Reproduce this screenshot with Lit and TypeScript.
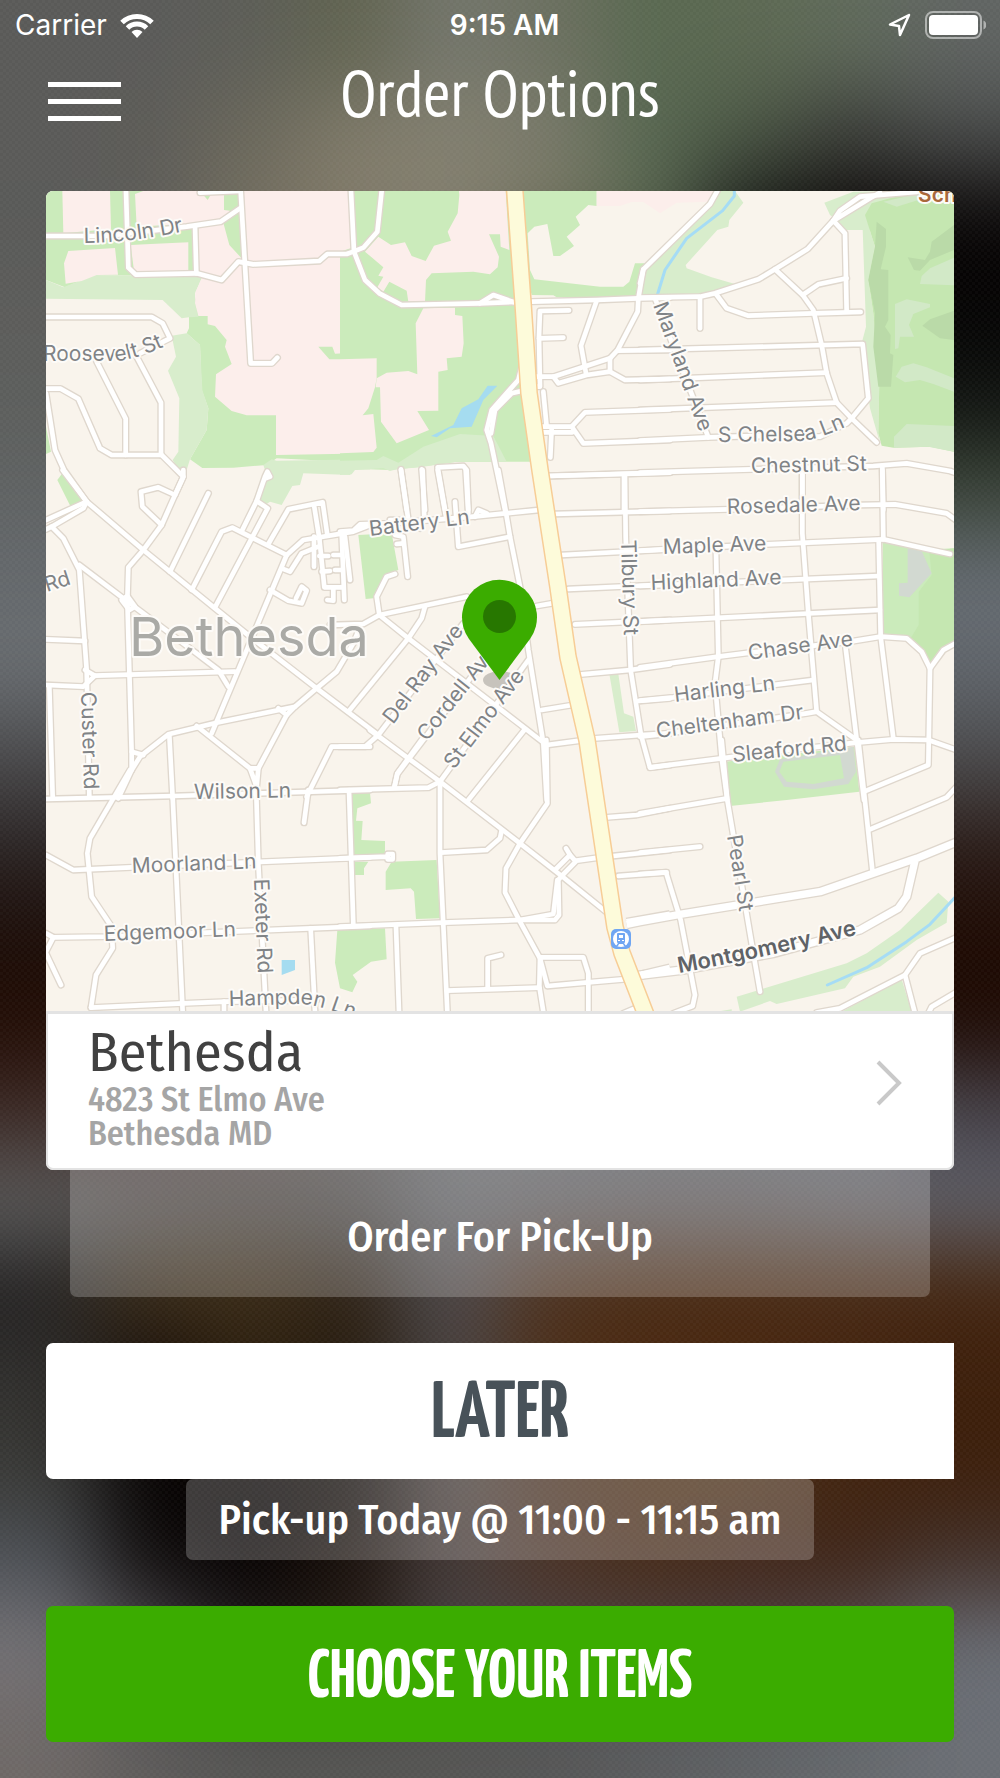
import { LitElement, html, svg, css } from "lit";
import { customElement } from "lit/decorators.js";

/* ---------- Map data ----------
   The map is surveyed in sheets. Each sheet has an origin on the map plane
   and is drawn at three units per map pixel. */

interface Sheet {
  x: number;
  y: number;
  areas: [string, string][];
  roads: string[];
  avenues?: string[];
  streams?: string[];
}

const GREEN = "#cbebbb";
const PALE = "#d8edcc";
const PINK = "#fceeeb";
const PARK = "#c5e7b1";
const SHADE = "#badaa8";
const GLADE = "#d2e9c7";
const WATER = "#a5dcf0";
const TRACK = "#d2d9d1";
const LAND = "#f9f4ec";

const sheets: Sheet[] = [
  {
    x: 40, y: 180,
    areas: [
      [GREEN, "18,33 1000,33 1000,850 710,835 680,855 580,863 487,864 450,838 500,750 505,685 485,630 480,495 440,460 447,445 447,410 490,290 165,285 75,322 18,300"],
      [PALE, "18,300 70,322 165,285 487,290 465,340 465,370 475,410 447,412 425,415 368,360 18,356"],
      [PALE, "395,467 440,460 480,495 487,630 505,685 500,750 450,838 440,870 425,885 398,840 415,815 418,655 384,572 408,530"],
      [PALE, "670,855 695,838 710,842 990,838 990,868 940,870 930,885 790,880 780,915 757,918 725,975 690,965 660,985 640,960 675,870"],
      [PINK, "67,33 210,33 213,147 70,160"],
      [PINK, "285,42 310,33 552,33 552,90 570,92 545,125 290,140"],
      [GREEN, "490,45 512,45 503,60"],
      [PINK, "85,213 225,204 234,284 170,285 125,303 77,311 72,250"],
      [PINK, "272,195 332,192 445,187 445,272 283,280"],
      [PINK, "475,140 550,128 568,195 605,235 600,33 930,33 940,215 955,270 965,290 950,297 965,315 970,420 980,440 980,516 885,521 877,500 835,500 868,538 1005,538 1005,820 708,825 708,706 620,706 575,693 525,650 528,583 575,552 555,500 560,480 525,438 503,433 503,408 475,408 465,370 467,335 487,290 475,280"],
      [GREEN, "18,740 33,815 18,822"],
    ],
    roads: [
      "18,168 200,168 440,140 542,125 600,85", "480,38 600,33",
      "258,33 265,263 287,284 470,280 545,300 595,245 640,253 838,243 862,222 920,222 940,215 970,203 1012,155 1025,33",
      "465,138 469,280", "602,33 605,85 632,550 696,550 712,533",
      "18,411 335,411 368,430 390,475 300,520",
      "18,626 62,626 115,656 180,805 215,825 365,825 430,890 405,945",
      "170,545 257,716 257,825", "290,530 363,668 363,825",
      "18,640 45,810 72,870 140,965",
    ],
  },
  {
    x: 340, y: 180,
    areas: [
      [GREEN, "0,33 500,33 570,845 350,845 240,860 150,870 0,865"],
      [GREEN, "500,33 770,33 770,78 745,75 707,110 720,135 680,170 702,198 660,228 640,228 622,132 583,140 563,160 570,270 583,298 780,320 850,320 868,305 885,250 930,250 900,355 650,352 640,346 575,345"],
      [PALE, "0,885 35,883 45,870 130,865 150,873 170,868 240,862 350,845 500,845 460,768 360,762 250,800 175,848 130,828 110,840 0,842"],
      [PINK, "0,33 30,33 45,200 0,215"],
      [PINK, "357,33 497,33 508,210 482,200 480,163 447,163 477,230 473,262 450,283 400,275 275,280 258,300 255,365 205,365 200,332 148,305 130,335 112,322 130,290 115,287 130,262 75,215 115,170 153,195 195,187 215,228 257,243 282,197 333,182 323,155 353,100 358,45"],
      [PINK, "0,538 110,535 110,595 105,622 85,685 68,706 100,702 110,803 100,816 0,820"],
      [PINK, "110,595 140,578 205,573 232,583 227,430 250,385 345,383 345,405 367,408 371,490 365,530 320,535 323,570 295,575 295,692 232,693 267,750 170,790 123,725 120,622 107,622"],
      [PINK, "770,33 1120,33 1105,65 1010,68 960,100 910,66 875,66 840,78 770,78"],
      [WATER, "443,617 472,617 430,660 395,740 330,745 290,772 273,768 340,735 365,685 415,658"],
    ],
    roads: [
      "33,33 42,215 75,300 118,340 185,375 420,370 525,366", "420,370 460,345 520,366",
      "575,365 770,360 895,355 990,353", "770,362 723,497 738,580",
      "910,268 895,355 893,395 833,510 810,535 640,590 655,610 740,585 810,575 855,600 990,597",
      "585,590 640,590", "810,535 810,575", "833,512 990,510",
      "687,391 600,393 597,470 600,620 590,620", "597,475 670,473",
      "610,635 620,740", "635,745 631,832",
      "605,740 695,740 735,697 990,688", "605,757 697,757", "695,740 730,790 990,780",
      "545,560 535,600 455,690 440,750 453,790 495,990", "548,632 515,640 465,690 453,760",
      "625,888 990,877", "852,885 852,990",
      "183,868 200,990", "245,868 255,990", "315,990 293,862 370,858 380,870 385,990",
    ],
  },
  {
    x: 640, y: 180,
    areas: [
      [PALE, "235,33 285,33 310,68 268,120 265,140 232,150 137,255 140,265 215,292 285,312 190,350 0,352 5,270"],
      [PALE, "553,68 640,35 830,33 690,150 610,150 590,120 570,105"],
      [PALE, "665,75 690,55 675,105 705,200 685,300 700,400 718,600 715,760 720,790 690,685 665,490 678,440 668,147"],
      [PARK, "675,105 695,70 830,33 942,33 942,815 870,800 760,803 725,797 715,760 718,600 700,400 685,300 705,200"],
      [SHADE, "710,125 738,147 738,200 722,268 745,270 745,420 735,440 752,465 750,520 760,525 753,620 715,620 700,500 705,400 685,300 705,200"],
      [SHADE, "942,135 942,210 870,240 840,272 822,270 803,232 855,240 870,215 875,185"],
      [SHADE, "942,392 942,480 900,475 847,437 870,418"],
      [GLADE, "942,233 942,316 840,312 845,288 870,265"],
      [GLADE, "765,372 800,358 870,372 870,382 820,402 807,435 822,470 780,470 775,505 765,507"],
      [GLADE, "767,590 785,560 820,550 860,562 942,595 942,635 880,612 840,600 795,607"],
      [GLADE, "762,770 800,732 942,738 942,815 865,800 762,803"],
      [GLADE, "730,65 830,42 870,33 835,60 770,80"],
    ],
    streams: ["283,33 283,48 248,92 140,175 75,270 53,342"],
    roads: [
      "232,33 210,72 10,268 0,310",
      "0,353 180,350 225,340 355,298 405,268 503,207 580,122 615,160 620,395",
      "580,122 600,92 660,50 830,36", "580,122 690,55 720,38",
      "405,268 488,345 520,390 545,495 560,580 590,668 635,715 710,787",
      "488,345 535,313 620,295", "228,342 260,385 325,407 520,400 662,396", "180,352 180,445",
      "0,510 668,492 685,655 635,715", "0,600 560,578", "0,690 590,668",
      "0,782 205,772 340,768 540,770 620,730 635,715", "45,355 205,772",
      "0,878 335,868 700,858 800,850 930,873 950,880", "487,870 487,990", "727,858 730,990",
    ],
  },
  {
    x: 40, y: 470,
    areas: [
      [GREEN, "68,8 52,30 92,110 135,90"],
      ["#dfe6cc", "35,165 128,112 60,150"],
    ],
    roads: [
      "68,0 140,95 310,240 525,415 630,500 830,655 1015,795",
      "18,150 140,95", "18,178 35,170 130,115 140,95",
      "35,170 70,205 118,300 140,600 148,980",
      "118,285 250,385 430,520 535,600 565,650",
      "430,0 430,20 405,75 365,165 310,240 265,292 262,390 275,850 275,900",
      "405,75 355,52 303,65 307,110 365,165", "505,70 390,305",
      "455,360 545,185 577,173 740,255", "525,412 683,115 650,93 607,180", "650,93 675,20 682,5 690,20 675,26",
      "685,222 745,118 848,97 862,195", "740,255 790,210 940,185 990,165",
      "740,255 515,790", "822,105 838,205",
      "725,295 750,305 785,250 835,230", "690,360 745,392 785,400 800,362 785,350 768,385",
      "822,200 822,290", "838,205 853,352 910,352", "905,190 913,390", "915,200 930,330",
      "838,258 865,258", "880,255 905,255", "845,305 870,303", "885,300 908,300", "880,355 880,392 862,390",
      "18,508 135,513", "18,645 130,650 165,617 585,605", "135,600 165,617", "28,650 38,980",
      "235,985 275,900 300,860 385,793 530,758 765,710 830,655 890,605 940,520 960,470",
      "275,845 310,855", "470,768 630,895 655,895 740,735 715,715", "740,735 765,710",
      "630,895 650,950 655,895", "388,795 398,985", "870,465 970,462 1018,435",
      "990,830 970,830 875,830 800,980", "925,725 1105,505 1145,445 1155,410",
      "245,390 262,378 285,410 268,420 245,390",
    ],
  },
  {
    x: 340, y: 470,
    areas: [
      [GREEN, "55,195 155,190 175,300 135,315 100,385 77,387"],
      [PALE, "808,612 835,612 852,730 880,740 888,783 838,787"],
    ],
    roads: [
      "0,185 40,182 60,163 150,160 400,140 597,120",
      "183,0 205,150", "248,0 253,150", "293,0 318,140", "377,0 385,130",
      "345,95 355,230 510,200", "405,140 415,120 440,130",
      "475,0 495,110 510,200 540,350 565,540 610,820 620,990",
      "165,195 190,200 203,320", "150,150 205,150 240,175", "170,222 190,220",
      "625,18 990,8", "643,132 990,123", "665,255 990,238", "685,357 990,343",
      "705,463 990,450", "725,613 870,600 990,583",
      "855,18 857,200 872,600 903,795 930,893 990,885",
      "895,693 990,685", "765,805 903,795 990,790",
      "165,312 140,320 110,380 118,435 205,505 620,825 720,812",
      "118,435 380,380", "590,408 648,398",
      "0,830 75,830 115,795 370,460", "163,950 172,912 440,560",
      "300,935 565,570", "553,780 385,990", "605,720 697,705",
    ],
  },
  {
    x: 640, y: 470,
    areas: [
      [GREEN, "728,215 840,240 942,235 942,522 910,538 868,580 845,545 800,500 728,495"],
      [PARK, "868,245 942,235 942,522 910,538 868,580 845,545 812,505 836,465 836,365 875,315"],
      [TRACK, "803,235 845,243 875,310 808,382 777,377 777,340 803,338"],
      [GREEN, "255,875 645,830 658,965 440,990 270,1008"],
      [TRACK, "470,860 640,830 648,905 625,942 520,958 432,950 405,905 420,868"],
      [GREEN, "430,875 600,855 612,925 520,942 440,935 418,905"],
    ],
    roads: [
      "0,125 265,118 660,105 765,103 920,130 950,152",
      "0,242 70,238 380,223 730,208 930,252",
      "487,0 487,190 505,430 530,725 650,810", "530,725 500,730 50,795 0,800",
      "650,818 760,808 865,810 950,840", "727,0 730,208", "716,210 722,500 760,805",
      "0,348 716,318", "0,455 720,420",
      "0,592 235,560 330,548 630,515 722,500 800,505 845,545 870,595 865,885 672,965",
      "870,595 910,540 950,518", "228,245 235,560 225,640 245,865 262,990",
      "0,692 100,682 520,630", "617,535 672,990", "30,892 245,865 400,845 650,818",
    ],
  },
  {
    x: 40, y: 740,
    areas: [[WATER, "725,660 765,660 765,690 725,705"]],
    roads: [
      "18,177 400,168 990,150", "270,90 220,175 150,295 142,340 155,470 215,560 218,625 168,705 153,803",
      "153,803 430,790 560,785 830,780", "18,345 100,390 275,382 990,352",
      "18,580 40,592 18,635", "40,592 200,590 990,558", "18,640 63,735",
      "398,170 428,815", "648,130 655,370 678,815", "805,150 792,248",
      "927,150 940,555", "812,565 825,815", "552,785 552,815",
    ],
  },
  {
    x: 340, y: 740,
    areas: [
      [GREEN, "35,158 90,158 93,190 52,205 48,242 68,243 64,300 135,303 135,343 40,345"],
      [GREEN, "42,365 85,365 72,385 72,405 44,405"],
      [GREEN, "155,365 290,360 300,535 228,537 222,455 212,445 137,450 137,395"],
      [GREEN, "-8,570 135,565 140,658 93,665 38,705 52,725 37,757 0,745 -15,668"],
    ],
    roads: [
      "0,150 265,143 300,125", "90,-30 205,55 300,125 540,310 665,408 810,525",
      "300,125 300,340 322,815", "245,0 172,100 163,143",
      "619,0 622,190 540,310 498,385 495,457 540,545 600,655 598,740 610,815",
      "302,338 440,330 480,295 485,270", "0,355 143,350 143,342 158,342 158,358 143,358",
      "0,560 310,548 540,540 645,540 657,525 655,420 665,408 710,362 780,352",
      "540,540 640,522 652,420", "645,390 690,345 678,325", "690,345 705,362",
      "820,348 990,330", "800,232 890,225 990,205", "835,408 980,397",
      "600,652 730,652 745,700 745,815", "600,655 622,738 745,727 850,718",
      "320,752 598,743", "443,745 443,655 483,645", "168,560 177,815", "850,820 885,805",
    ],
    avenues: ["860,548 990,525", "905,705 990,685"],
  },
  {
    x: 640, y: 740,
    areas: [
      [PALE, "290,770 620,670 680,640 780,570 895,458 925,485 920,548 830,600 720,680 640,710 615,745 410,792 390,783 300,815"],
      [PALE, "605,815 785,718 815,815"],
      [PALE, "230,815 275,808 275,815"],
    ],
    streams: ["562,735 680,683 800,605 870,553 950,467"],
    roads: [
      "245,0 262,180 340,640 360,755", "0,220 258,176", "0,338 180,320",
      "0,402 78,397 122,540 165,765 158,798 100,820",
      "655,0 672,155 697,390", "690,268 920,172 950,140",
      "530,818 600,805 795,705 840,640 950,592", "795,705 825,820", "865,820 875,800 950,756",
    ],
    avenues: ["-40,553 0,545 120,523 540,455 830,355 950,306", "825,362 800,470 775,505 660,570 400,640 130,690 -20,708"],
  },
];

const HIGHWAY = "514,180 523,303 529,393 540,470 558,587 568,657 587,740 615,927 622,953 648,1020";

interface Label {
  text: string;
  d: string;
  kind?: string;
}

const labels: Label[] = [
  { text: "Lincoln Dr", d: "M84 243Q132 243 200 228" },
  { text: "Roosevelt St", d: "M43 361L118 361Q150 357 200 328" },
  { text: "Maryland Ave", d: "M653 305L712 466" },
  { text: "S Chelsea Ln", d: "M718 442L800 441Q820 441 880 410" },
  { text: "Chestnut St", d: "M751 473L900 470" },
  { text: "Rosedale Ave", d: "M727 514L900 509" },
  { text: "Maple Ave", d: "M663 554L800 549" },
  { text: "Highland Ave", d: "M651 590L830 582" },
  { text: "Chase Ave", d: "M749 660L880 642" },
  { text: "Harling Ln", d: "M675 702L800 687" },
  { text: "Cheltenham Dr", d: "M657 738L840 714" },
  { text: "Sleaford Rd", d: "M733 762L880 747" },
  { text: "Tilbury St", d: "M621 540L625 670" },
  { text: "Pearl St", d: "M727 836L744 940" },
  { text: "Battery Ln", d: "M370 536L500 520" },
  { text: "Del Ray Ave", d: "M393 725L483 606" },
  { text: "Cordell Ave", d: "M427 742L520 624" },
  { text: "St Elmo Ave", d: "M454 770L548 646" },
  { text: "Wilson Ln", d: "M194 799L320 797" },
  { text: "Moorland Ln", d: "M132 873L290 867" },
  { text: "Edgemoor Ln", d: "M104 941L270 935" },
  { text: "Exeter Rd", d: "M254 879L259 1000" },
  { text: "Custer Rd", d: "M81 692L85 820" },
  { text: "Hampden Ln", d: "M229 1006L300 1004Q322 1004 370 1026" },
  { text: "Rd", d: "M47 592L90 578" },
  { text: "Bethesda", d: "M129 656L420 656", kind: "town" },
  { text: "Montgomery Ave", d: "M679 973Q780 955 890 926", kind: "avenue" },
  { text: "Sch", d: "M918 202L980 202", kind: "place" },
];

const at = (s: Sheet) => `translate(${s.x} ${s.y}) scale(${1 / 3})`;

@customElement("location-map")
export class LocationMap extends LitElement {
  static styles = css`
    :host { display: block; }
    .map { display: block; width: 100%; height: auto; }
    .line { fill: none; stroke-linejoin: round; stroke-linecap: round; }
    .casing { stroke: #dfd7cd; stroke-width: 22; }
    .road { stroke: #fff; stroke-width: 14; }
    .casing-wide { stroke: #dfd7cd; stroke-width: 30; stroke-linecap: butt; }
    .road-wide { stroke: #fff; stroke-width: 22; stroke-linecap: butt; }
    .stream { stroke: #a5dcf5; stroke-width: 9; }
    .highway-edge { stroke: #f7cd96; stroke-width: 18; }
    .highway { stroke: #fdfbda; stroke-width: 15; }
    .label {
      font: 21px Inter, "Liberation Sans", sans-serif;
      fill: #808386;
      stroke: #fdfbf8;
      stroke-width: 4px;
      stroke-linejoin: round;
      paint-order: stroke;
    }
    .town { font-size: 54px; fill: #aaaaa6; }
    .avenue { font-size: 22px; font-weight: 600; fill: #606367; }
    .place { font-weight: 600; fill: #a9683b; }
  `;

  render() {
    const pass = (cls: string, key: "roads" | "avenues" | "streams") =>
      sheets.map((s) => svg`<g transform=${at(s)}>${(s[key] ?? []).map(
        (p) => svg`<polyline class="line ${cls}" points=${p}></polyline>`)}</g>`);
    return html`
      <svg class="map" viewBox="46 191 908 820" role="img" aria-label="Map of Bethesda">
        <rect x="46" y="191" width="908" height="820" fill=${LAND}></rect>
        ${sheets.map((s) => svg`<g transform=${at(s)}>${s.areas.map(
          ([fill, p]) => svg`<polygon points=${p} fill=${fill}></polygon>`)}</g>`)}
        ${pass("stream", "streams")}
        ${pass("casing", "roads")}
        ${pass("casing-wide", "avenues")}
        ${pass("road", "roads")}
        ${pass("road-wide", "avenues")}
        <polyline class="line highway-edge" points=${HIGHWAY}></polyline>
        <polyline class="line highway" points=${HIGHWAY}></polyline>
        <ellipse cx="500" cy="680" rx="17" ry="9" fill="#000" fill-opacity=".2"></ellipse>
        ${labels.map((l, i) => svg`
          <path id="way-${i}" d=${l.d} fill="none"></path>
          <text class="label ${l.kind ?? ""}"><textPath href="#way-${i}">${l.text}</textPath></text>`)}
        <g>
          <rect x="611" y="929" width="20" height="20" rx="5" fill="#70a6f2"></rect>
          <circle cx="621" cy="939" r="8" fill="#fff"></circle>
          <path fill="#70a6f2" fill-rule="evenodd" d="M618 933h6a1 1 0 0 1 1 1v8a1 1 0 0 1-1 1l2 3h-2l-1-2h-4l-1 2h-2l2-3a1 1 0 0 1-1-1v-8a1 1 0 0 1 1-1zM619 935v3h4v-3zM618 940v1h2v-1zM622 940v1h2v-1z"></path>
        </g>
        <path fill="#3bac00" d="M499.500 680L469 639A37.500 37.500 0 1 1 530 639Z"></path>
        <circle cx="499.500" cy="616.500" r="16.500" fill="#277700"></circle>
      </svg>
    `;
  }
}

/* Colour field of the out-of-focus photograph behind the page, row by row. */
const backdrop: string[][] = [
  "5a5a58 5a5a58 5c5d57 60634f 74766c 6c7060 586850 5c6852 5f6a5a 606462",
  "5a5a58 5c5b57 6a675a 7f7a69 827f70 7a7a6a 566650 4a5644 3a3c38 484a49",
  "595a58 5d5c58 746f60 827b69 837f6f 74745f 58664f 141614 080403 080505",
  "5c5c5a 5c5c5a 5c5c5a 5c5c5a 5c5c5a 040303 040303 040303 040303 040303",
  "5c5e5c 5c5e5c 5c5e5c 5c5e5c 5c5e5c 101310 101310 101310 101310 101310",
  "5f6262 5f6262 5f6262 5f6262 5f6262 3a4438 3a4438 3a4438 3a4438 3a4438",
  "64686c 64686c 64686c 64686c 64686c 656b72 656b72 656b72 656b72 656b72",
  "686c70 686c70 686c70 686c70 686c70 60656b 60656b 60656b 60656b 60656b",
  "4a4a4c 4a4a4c 4a4a4c 4a4a4c 4a4a4c 4a4a4c 4a4a4c 4a4a4c 4a4a4c 4a4a4c",
  "2a2424 2a2424 2a2424 2a2424 2a2424 2a1c18 2a1c18 2a1c18 2a1c18 2a1c18",
  "1c0d08 1c0d08 1c0d08 1c0d08 1c0d08 1e0a03 1e0a03 1e0a03 1e0a03 1e0a03",
  "220c04 220c04 220c04 220c04 220c04 1e0a03 1e0a03 1e0a03 1e0a03 1e0a03",
  "3c2a26 4a3a38 564a46 544e4c 606164 606164 5d5e62 5d5e62 5f6166 46424a",
  "5a5a5a 504c4c 4a4644 4c4a4a 626468 606064 5d5c60 5d5c60 5f6066 5e5f67",
  "222020 382a16 3a2a14 2c1f12 4c484a 4d301c 4b2a12 4a2911 482811 442510",
  "302f2d 140a06 2c2010 241a0d 4a4444 4a2d18 482811 462610 422310 3c1f0b",
  "383835 030000 040101 0c0806 4a4240 4a3222 4b2f16 4a3018 42240e 3c1f0b",
  "4c5056 100c0b 040000 1a100a 443a38 4a3226 462a18 42261a 3e2418 42302a",
  "747276 4a4a50 201c1c 241c16 484446 4c4244 4c4244 4c4244 544c4e 686c74",
  "6e6866 5c5a59 555553 555553 555553 555656 5a5c5e 5f6265 64686c 6a6e74",
].map((row) => row.split(" "));

const ROW = 89;

@customElement("app-root")
export class AppRoot extends LitElement {
  static styles = css`
    :host {
      display: block;
      position: relative;
      overflow: hidden;
      background: #4a4a48;
      color: #fff;
      font-family: "Fira Sans Condensed", "Roboto Condensed", "Open Sans", sans-serif;
    }
    * { box-sizing: border-box; }
    button { font: inherit; color: inherit; border: 0; padding: 0; background: none; cursor: pointer; }
    .backdrop, .weave { position: absolute; inset: 0; width: 100%; height: 100%; }
    .page { position: relative; display: flex; flex-direction: column; min-height: 100vh; }

    .status {
      display: grid;
      grid-template-columns: 1fr auto 1fr;
      align-items: center;
      height: 50px;
      padding: 0 14px 0 15px;
      font: 28px/32px Inter, "Liberation Sans", sans-serif;
    }
    .side { display: flex; align-items: center; gap: 13px; }
    .end { justify-content: flex-end; }
    .clock { padding-left: 8px; font-weight: 600; }

    .top {
      display: grid;
      grid-template-columns: 80px 1fr 80px;
      align-items: center;
      height: 104px;
      margin-bottom: 37px;
      padding: 0 46px;
    }
    .menu { display: flex; width: 76px; height: 60px; align-items: center; justify-content: center; }
    .title {
      margin: 0;
      padding-bottom: 20px;
      text-align: center;
      font-family: "PT Sans Narrow", "Fira Sans Condensed", sans-serif;
      font-size: 66px;
      line-height: 80px;
      font-weight: 400;
    }

    .content { display: flex; flex-direction: column; padding: 0 46px 37px; }
    .card { border-radius: 7px; overflow: hidden; background: #fff; }
    .place {
      display: flex;
      align-items: center;
      justify-content: space-between;
      width: 100%;
      height: 159px;
      padding: 0 50px 16px 40px;
      border: 2px solid #e3e3e3;
      border-width: 3px 2px 2px;
      border-radius: 0 0 7px 7px;
      text-align: left;
      color: #a5a5a5;
      font-size: 34px;
      font-weight: 500;
      line-height: 34px;
    }
    .where { display: flex; flex-direction: column; padding-top: 8px; }
    .name { color: #414141; font-size: 56px; font-weight: 400; line-height: 60px; }
    .mode {
      height: 127px;
      margin: 0 24px 46px;
      padding-top: 6px;
      border-radius: 0 0 7px 7px;
      background: rgba(255, 255, 255, 0.22);
      font-size: 42px;
      font-weight: 500;
    }
    .when, .go {
      height: 136px;
      padding-top: 10px;
      font-family: "Yanone Kaffeesatz", "Open Sans Condensed", sans-serif;
      font-weight: 700;
    }
    .when {
      border-radius: 7px 0 0 7px;
      background: #fff;
      color: #485259;
      font-size: 80px;
    }
    .slot {
      align-self: center;
      height: 81px;
      margin-bottom: 46px;
      padding: 0 32px;
      border-radius: 7px;
      background: rgba(255, 255, 255, 0.22);
      font-size: 42px;
      font-weight: 500;
    }
    .go {
      border-radius: 7px;
      background: #3bac00;
      font-size: 68px;
    }
  `;

  render() {
    return html`
      <svg class="backdrop" viewBox="0 0 1000 1778" preserveAspectRatio="none" aria-hidden="true">
        <defs>
          <filter id="soft" filterUnits="userSpaceOnUse" x="-200" y="-200" width="1400" height="2178" color-interpolation-filters="sRGB">
            <feGaussianBlur stdDeviation="42"></feGaussianBlur>
          </filter>
        </defs>
        <g filter="url(#soft)">
          ${backdrop.map((row, r) => row.map((c, i) => {
            const left = i === 0 ? -200 : i * 100;
            const right = i === row.length - 1 ? 1200 : i * 100 + 101;
            const top = r === 0 ? -200 : r * ROW;
            const bottom = r === backdrop.length - 1 ? 1978 : r * ROW + ROW + 1;
            return svg`<rect x=${left} y=${top} width=${right - left} height=${bottom - top} fill="#${c}"></rect>`;
          }))}
        </g>
      </svg>
      <svg class="weave" aria-hidden="true">
        <defs>
          <pattern id="dots" width="6" height="6" patternUnits="userSpaceOnUse">
            <path d="M0 0h3v3h-3zM3 3h3v3h-3z" fill="#fff" fill-opacity=".025"></path>
          </pattern>
        </defs>
        <rect width="100%" height="100%" fill="url(#dots)"></rect>
      </svg>

      <div class="page">
        <div class="status">
          <div class="side">
            <span>Carrier</span>
            <svg width="34" height="25" viewBox="0 0 34 25" aria-label="Wi-Fi">
              <g fill="none" stroke="#fff" stroke-width="5">
                <path d="M2 9.500A21.500 21.500 0 0 1 32 9.500"></path>
                <path d="M7.500 15A13.500 13.500 0 0 1 26.500 15"></path>
              </g>
              <path fill="#fff" d="M17 25l-5.500-6a8 8 0 0 1 11 0z"></path>
            </svg>
          </div>
          <span class="clock">9:15 AM</span>
          <div class="side end">
            <svg width="23" height="24" viewBox="0 0 23 24" aria-label="Location in use">
              <path fill="none" stroke="#fff" stroke-width="2.500" stroke-linejoin="round" d="M21 2L2 11.500L11 13L12 22Z"></path>
            </svg>
            <svg width="62" height="28" viewBox="0 0 62 28" aria-label="Battery full">
              <rect x="2" y="1" width="55" height="26" rx="7" fill="none" stroke="#fff" stroke-opacity=".5" stroke-width="2"></rect>
              <rect x="5" y="4" width="49" height="20" rx="4" fill="#fff"></rect>
              <path d="M59.500 9.500a5 5 0 0 1 0 9z" fill="#fff" fill-opacity=".5"></path>
            </svg>
          </div>
        </div>

        <header class="top">
          <button class="menu" aria-label="Menu">
            <svg width="73" height="40" viewBox="0 0 73 40" fill="#fff" aria-hidden="true">
              <rect width="73" height="5"></rect>
              <rect y="17" width="73" height="5"></rect>
              <rect y="34" width="73" height="5"></rect>
            </svg>
          </button>
          <h1 class="title">Order Options</h1>
        </header>

        <main class="content">
          <section class="card">
            <location-map></location-map>
            <button class="place">
              <span class="where">
                <span class="name">Bethesda</span>
                <span>4823 St Elmo Ave</span>
                <span>Bethesda MD</span>
              </span>
              <svg width="26" height="46" viewBox="0 0 26 46" aria-hidden="true">
                <path d="M2 2L23 23L2 44" fill="none" stroke="#c9c9c9" stroke-width="4"></path>
              </svg>
            </button>
          </section>
          <button class="mode">Order For Pick-Up</button>
          <button class="when">LATER</button>
          <button class="slot">Pick-up Today @ 11:00 - 11:15 am</button>
          <button class="go">CHOOSE YOUR ITEMS</button>
        </main>
      </div>
    `;
  }
}
